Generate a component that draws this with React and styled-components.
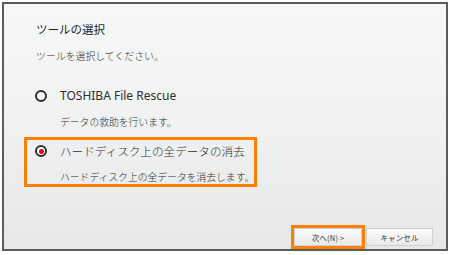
import React from 'react'
import styled, { createGlobalStyle } from 'styled-components'

const GlobalStyle = createGlobalStyle`
  html, body {
    margin: 0;
    padding: 0;
    background: #ffffff;
  }
  body {
    font-family: "Noto Sans", "Noto Sans CJK JP", sans-serif;
    color: #2f2f2f;
  }
`

const Frame = styled.div`
  margin: 2px 0 0 2px;
  width: 442px;
  height: 245px;
  border: 2px solid #5c5c5c;
  background: linear-gradient(#f6f7f7 0%, #f1f2f2 45%, #e6e7e8 100%);
  display: flex;
  flex-direction: column;
  overflow: hidden;
`

const Main = styled.div`
  flex: 1;
  display: flex;
  flex-direction: column;
  padding: 17px 0 0 20px;
`

const Title = styled.div`
  padding-left: 12px;
  font-family: "Noto Sans CJK JP", sans-serif;
  font-size: 11.5px;
  line-height: 16px;
  color: #1f1f1f;
`

const Subtitle = styled.div`
  padding-left: 12px;
  margin-top: 12px;
  font-family: "Noto Sans CJK JP", sans-serif;
  font-weight: 300;
  font-size: 9.9px;
  line-height: 14px;
`

const OptionBox = styled.div`
  width: 219px;
  margin-top: ${p => p.$first ? '19px' : '5px'};
  border: 3px solid ${p => p.$active ? '#ff8000' : 'transparent'};
  padding: 3px 0 0 8px;
  display: flex;
  flex-direction: column;
`

const OptionRow = styled.div`
  display: flex;
  align-items: center;
  height: 16px;
  gap: 13px;
`

const Radio = styled.span`
  box-sizing: border-box;
  width: 12px;
  height: 12px;
  border-radius: 50%;
  border: 2px solid #2e2e2e;
  background: #f7f7f7;
  display: flex;
  align-items: center;
  justify-content: center;
  &::after {
    content: '';
    width: 5px;
    height: 5px;
    border-radius: 50%;
    background: ${p => p.$checked ? '#e60012' : 'transparent'};
  }
`

const Label = styled.span`
  font-family: ${p => p.$latin ? '"Noto Sans", "Noto Sans CJK JP", sans-serif' : '"Noto Sans CJK JP", sans-serif'};
  font-weight: ${p => p.$latin ? 400 : 300};
  font-size: ${p => p.$latin ? '12px' : '11.6px'};
  line-height: 16px;
  white-space: nowrap;
`

const Desc = styled.div`
  margin-top: 11px;
  padding-left: 25px;
  font-family: "Noto Sans CJK JP", sans-serif;
  font-weight: 300;
  font-size: 9.8px;
  line-height: 14px;
  white-space: nowrap;
`

const Footer = styled.div`
  display: flex;
  justify-content: flex-end;
  align-items: flex-end;
  gap: 1px;
  padding: 0 13px 0 0;
`

const Focus = styled.div`
  border: 3px solid #ff8000;
  display: flex;
`

const Button = styled.div`
  box-sizing: border-box;
  width: ${p => p.$w}px;
  height: 18px;
  margin-bottom: ${p => p.$plain ? '3px' : '0'};
  border: 1px solid #cfcfcf;
  background: linear-gradient(#fbfbfb, #e9e9e9);
  display: flex;
  align-items: center;
  justify-content: center;
  font-family: "Noto Sans CJK JP", sans-serif;
  font-size: 7.5px;
  color: #3a3a3a;
  letter-spacing: 0.2px;
`

export default function App() {
  return (
    <>
      <GlobalStyle />
      <Frame>
        <Main>
          <Title>ツールの選択</Title>
          <Subtitle>ツールを選択してください。</Subtitle>
          <OptionBox $first>
            <OptionRow>
              <Radio />
              <Label $latin>TOSHIBA File Rescue</Label>
            </OptionRow>
            <Desc>データの救助を行います。</Desc>
          </OptionBox>
          <OptionBox $active>
            <OptionRow>
              <Radio $checked />
              <Label>ハードディスク上の全データの消去</Label>
            </OptionRow>
            <Desc>ハードディスク上の全データを消去します。</Desc>
          </OptionBox>
        </Main>
        <Footer>
          <Focus>
            <Button $w={68}>次へ(N) &gt;</Button>
          </Focus>
          <Button $w={67} $plain>キャンセル</Button>
        </Footer>
      </Frame>
    </>
  )
}
